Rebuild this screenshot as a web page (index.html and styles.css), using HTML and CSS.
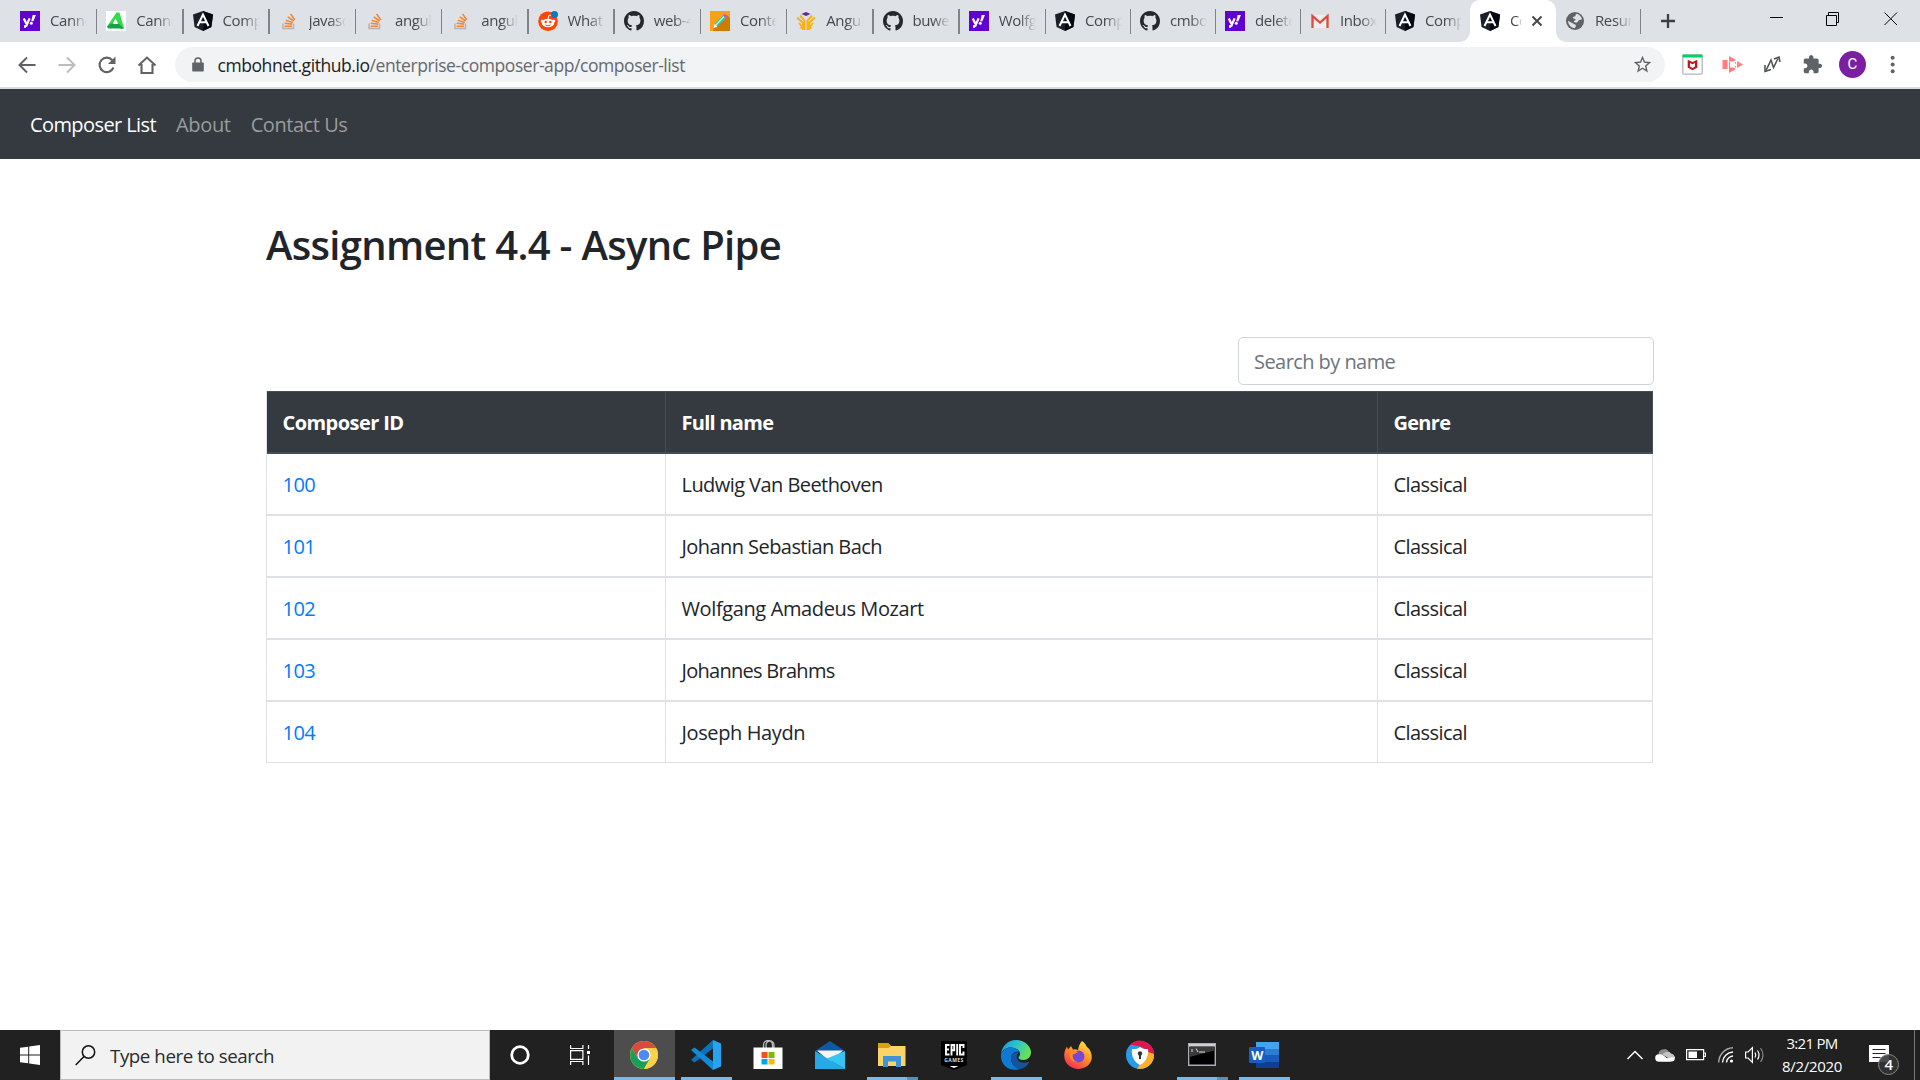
FILE: index.html
```html
<!DOCTYPE html>
<html lang="en">
<head>
<meta charset="utf-8">
<title>Enterprise Composer App</title>
<link rel="stylesheet" href="styles.css">
</head>
<body>
<svg class="sprite" width="0" height="0" aria-hidden="true">
  <symbol id="yahoo" viewBox="0 0 20 20"><path fill="#6001d2" d="M0 0h20v20H0z"/><path d="M3.800 7.400l2.600 5.400M9.600 7.400L6 15.600M4 15.500h2" fill="none" stroke="#fff" stroke-width="2.300"/><path d="M12.700 4h3.200l-2.500 6.200h-2.200z" fill="#fff"/><circle cx="11.300" cy="12.200" r="1.500" fill="#fff"/></symbol>
  <symbol id="canna" viewBox="0 0 20 20"><path fill="#fff" d="M0 0h20v20H0z"/><path fill="#35d94f" d="M10.500 1.500h3L18 17l-3 1.500-5.500-11-4 8H1z"/><path fill="#15a343" d="M5.500 12.500h7l5.500 5H2l-1-2z"/><path fill="#fff" d="M9.500 8.500l2.500 4.500H7z"/></symbol>
  <symbol id="angular" viewBox="0 0 20 20"><path fill="#1b1f27" d="M10 0l10 3.500-1.600 12.500L10 20 1.600 16 0 3.500z"/><path fill="#050811" d="M10 0l10 3.500-1.600 12.500L10 20z"/><path d="M4.500 15L10 3.500 15.500 15M7 11.200h6" fill="none" stroke="#fff" stroke-width="2"/></symbol>
  <symbol id="stack" viewBox="0 0 20 20"><path d="M4 12.500v5h10.500v-5" fill="none" stroke="#b1b5ba" stroke-width="1.500"/><path d="M5.500 15.200h7.500M5.700 12.300l7.500.8M6.700 9.200l7 2.200M8.700 5.800l6 4.200M11.600 3l4.200 5.900" stroke="#f48735" stroke-width="1.600"/></symbol>
  <symbol id="reddit" viewBox="0 0 20 20"><circle cx="10" cy="10.200" r="9.800" fill="#ff4500"/><ellipse cx="10" cy="12" rx="6.200" ry="4.300" fill="#fff"/><circle cx="4.200" cy="10" r="1.500" fill="#fff"/><circle cx="15.800" cy="10" r="1.500" fill="#fff"/><path d="M10 8l1-4 3 .7" stroke="#fff" fill="none"/><circle cx="7.700" cy="11" r="1.200" fill="#ff4500"/><circle cx="12.300" cy="11" r="1.200" fill="#ff4500"/><path d="M7.500 14q2.500 1.700 5 0" stroke="#ff4500" fill="none"/><circle cx="16.500" cy="3.500" r="3.500" fill="#0079d3"/></symbol>
  <symbol id="github" viewBox="0 0 16 16"><path fill="#24292e" d="M8 0C3.580 0 0 3.580 0 8c0 3.540 2.290 6.530 5.470 7.590.4.070.55-.17.55-.38 0-.19-.01-.82-.01-1.490-2.010.37-2.530-.49-2.690-.94-.09-.23-.48-.94-.82-1.130-.28-.15-.68-.52-.01-.53.63-.01 1.080.58 1.230.82.72 1.210 1.870.87 2.330.66.070-.52.28-.87.51-1.070-1.780-.2-3.640-.89-3.640-3.950 0-.87.31-1.590.82-2.150-.08-.2-.36-1.020.08-2.120 0 0 .67-.21 2.200.82.64-.18 1.320-.27 2-.27s1.360.09 2 .27c1.530-1.040 2.200-.82 2.200-.82.44 1.100.16 1.920.08 2.120.51.56.82 1.270.82 2.150 0 3.070-1.870 3.750-3.650 3.950.29.25.54.73.54 1.480 0 1.070-.01 1.930-.01 2.200 0 .21.15.46.55.38A8.010 8.010 0 0016 8c0-4.420-3.580-8-8-8z"/></symbol>
  <symbol id="pencil" viewBox="0 0 20 20"><path fill="#f9a01b" d="M0 0h20v20H0z"/><path fill="#d07b00" d="M17 4l3 3v13H3l1-4z"/><path d="M4 16.500l1.200-4 8.800-9 3 2.500-9 9z" fill="#25c6b8"/><path d="M5.500 14.500L15 4.500" stroke="#b8f0dc" stroke-width="1.300"/><path d="M12.800 4.500L14.500 2.500l3 2.500-1.700 2z" fill="#c85bc0"/><path d="M3.500 17l1.200-4 2.700 2.700z" fill="#fff"/></symbol>
  <symbol id="hands" viewBox="0 0 20 20"><path d="M10 1l4.500 2L10 5 5.500 3z" fill="#5c2d91"/><g fill="none" stroke="#fbb116" stroke-width="1.900"><path d="M1 6.500l6 5.500v7M19 6.500l-6 5.500v7M3 12l2.500 3v3M17 12l-2.500 3v3M4 4.500l4.500 5V19M16 4.500l-4.500 5V19"/></g></symbol>
  <symbol id="gmail" viewBox="0 0 20 20"><path fill="#eee" d="M2 4h16v13H2z"/><path d="M2.500 17V5l7.500 6.500L17.500 5v12" fill="none" stroke="#dd4b3e" stroke-width="2.300"/></symbol>
  <symbol id="globe" viewBox="0 0 20 20"><circle cx="10" cy="10" r="9" fill="#5f6368"/><path fill="#dee1e6" d="M11 2.800c3 .3 5.400 2.700 6 5.500-2 1-3.500.5-4 2.200-.3 1.500-2 1-3.500.8-1-.2-1-1.500.2-1.800 1.500-.4 1-1.700-.5-1.700-2-.2-2-2 .2-2.200 1.500-.2 1-1.800 1.600-2.800zM3 9.800l5 2.700c1.500 1 3 .8 3 2.400l-1.200 2.300C6.500 17 3.300 14.500 3 9.800z"/></symbol>
  <symbol id="x" viewBox="0 0 12 12"><path d="M1.500 1.500l9 9M10.500 1.500l-9 9" stroke="#45494d" stroke-width="2" fill="none"/></symbol>
</svg>

<header class="tabs">
  <div class="tab"><svg><use href="#yahoo"/></svg><span>Canno</span></div>
  <div class="tab"><svg><use href="#canna"/></svg><span>Canno</span></div>
  <div class="tab"><svg><use href="#angular"/></svg><span>Comp</span></div>
  <div class="tab"><svg><use href="#stack"/></svg><span>javasc</span></div>
  <div class="tab"><svg><use href="#stack"/></svg><span>angul</span></div>
  <div class="tab"><svg><use href="#stack"/></svg><span>angul</span></div>
  <div class="tab"><svg><use href="#reddit"/></svg><span>What</span></div>
  <div class="tab"><svg><use href="#github"/></svg><span>web-4</span></div>
  <div class="tab"><svg><use href="#pencil"/></svg><span>Conte</span></div>
  <div class="tab"><svg><use href="#hands"/></svg><span>Angul</span></div>
  <div class="tab"><svg><use href="#github"/></svg><span>buwe</span></div>
  <div class="tab"><svg><use href="#yahoo"/></svg><span>Wolfg</span></div>
  <div class="tab narrow"><svg><use href="#angular"/></svg><span>Comp</span></div>
  <div class="tab narrow"><svg><use href="#github"/></svg><span>cmbo</span></div>
  <div class="tab narrow"><svg><use href="#yahoo"/></svg><span>delete</span></div>
  <div class="tab narrow"><svg><use href="#gmail"/></svg><span>Inbox</span></div>
  <div class="tab before-active"><svg><use href="#angular"/></svg><span>Comp</span></div>
  <div class="tab active"><svg><use href="#angular"/></svg><span>Co</span><svg class="tab-close"><use href="#x"/></svg></div>
  <div class="tab after-active"><svg><use href="#globe"/></svg><span>Resun</span></div>
  <svg class="new-tab" viewBox="0 0 14 14"><path d="M7 0v14M0 7h14" stroke="#3c4043" stroke-width="2.300"/></svg>
  <svg class="window-controls" viewBox="0 0 128 14" fill="none" stroke="#000" stroke-width="1"><path d="M0 5.500h13"/><path d="M56.500 3.500h10v10h-10zM58.500 3.500v-3h10v10h-2"/><path d="M114.500 .5l12.500 12.500M127 .5l-12.500 12.500"/></svg>
</header>

<div class="toolbar">
  <div class="nav-buttons">
    <svg viewBox="0 0 20 20" fill="none" stroke="#5f6368" stroke-width="2"><path d="M18.500 10H3M10 2.500L2.500 10l7.500 7.500"/></svg>
    <svg viewBox="0 0 20 20" fill="none" stroke="#babcbe" stroke-width="2"><path d="M1.500 10H17M10 2.500l7.500 7.500-7.500 7.500"/></svg>
    <svg viewBox="0 0 20 20"><path d="M16.500 12.500A7.200 7.200 0 1 1 15.300 5.200" fill="none" stroke="#5f6368" stroke-width="2.100"/><path d="M18.500 1.500v7.500H11z" fill="#5f6368"/></svg>
    <svg viewBox="0 0 20 20" fill="none" stroke="#5f6368" stroke-width="2.100"><path d="M1.500 10.500L10 2.600l8.500 7.900M4.500 9v9h11V9"/></svg>
  </div>
  <div class="omnibox">
    <svg class="lock" viewBox="0 0 12 15"><path d="M1 5.500h10q.8 0 .8.800v7.400q0 .8-.8.800H1q-.8 0-.8-.8V6.300q0-.8.800-.8z" fill="#5f6368"/><path d="M3 6V4a3 3 0 0 1 6 0v2" fill="none" stroke="#5f6368" stroke-width="1.500"/></svg>
    <span class="url"><b>cmbohnet.github.io</b>/enterprise-composer-app/composer-list</span>
    <svg class="star" viewBox="0 0 24 24"><path fill="#5f6368" d="M22 9.240l-7.190-.62L12 2 9.190 8.630 2 9.240l5.460 4.730L5.820 21 12 17.270 18.180 21l-1.630-7.030L22 9.240zM12 15.400l-3.760 2.270 1-4.280-3.320-2.880 4.380-.38L12 6.100l1.710 4.040 4.380.38-3.320 2.880 1 4.280L12 15.400z"/></svg>
  </div>
  <div class="extensions">
    <svg viewBox="0 0 21 21"><rect x=".8" y="1" width="19.400" height="19.200" rx="1.500" fill="#fff" stroke="#b5b5b8" stroke-width="1.300"/><path d="M.5.500h20v3H.5z" fill="#00d166"/><path d="M5.700 5.800l4.800 2.200 4.800-2.200v7.700l-4.800 2.800-4.800-2.800z" fill="#c01818"/><path d="M8 9l2.500 1.300L13 9v3.500l-2.500 1.400L8 12.500z" fill="#fff"/></svg>
    <svg viewBox="0 0 21 21" fill="#ff7d7d"><path d="M.5 6h5v9h-5zM7 2l7 4-2.500 1.500H7zM15 7l6 3.500-6 3.500zM7 19l7-4-2.500-1.500H7z"/><path d="M7.500 8v6" stroke="#ff7d7d" stroke-width="1.200"/><path d="M13.500 8v1.500M13.500 12v1.500" stroke="#ff7d7d" stroke-width="1.200"/></svg>
    <svg viewBox="0 0 21 21" fill="none" stroke="#4b4f53" stroke-width="1.500"><path d="M4 16.500L9 6l2.500 7.500L16 4.500"/><path d="M12 5l5-2 1 5M3 11v6.500l6-2"/></svg>
    <svg viewBox="0 0 24 24"><path fill="#5f6368" d="M20.500 11H19V7c0-1.100-.9-2-2-2h-4V3.500C13 2.120 11.880 1 10.500 1S8 2.120 8 3.500V5H4c-1.100 0-1.990.9-1.990 2v3.800H3.500c1.490 0 2.700 1.210 2.700 2.700s-1.210 2.700-2.700 2.700H2V20c0 1.100.9 2 2 2h3.800v-1.500c0-1.490 1.210-2.700 2.700-2.700 1.490 0 2.700 1.210 2.700 2.700V22H17c1.100 0 2-.9 2-2v-4h1.500c1.380 0 2.500-1.120 2.500-2.500S21.880 11 20.500 11z"/></svg>
    <span class="avatar">C</span>
    <svg viewBox="0 0 20 20" fill="#5f6368"><circle cx="9.200" cy="3.500" r="1.900"/><circle cx="9.200" cy="10" r="1.900"/><circle cx="9.200" cy="16.500" r="1.900"/></svg>
  </div>
</div>

<nav class="navbar">
  <a class="current">Composer List</a>
  <a class="about">About</a>
  <a class="contact">Contact Us</a>
</nav>

<main class="page">
  <h2>Assignment 4.4 - Async Pipe</h2>
  <input class="search" type="text" placeholder="Search by name">
  <table>
    <colgroup><col class="col-id"><col class="col-name"><col></colgroup>
    <thead><tr><th>Composer ID</th><th class="tight">Full name</th><th class="tight">Genre</th></tr></thead>
    <tbody>
      <tr><td><a>100</a></td><td>Ludwig Van Beethoven</td><td>Classical</td></tr>
      <tr><td><a>101</a></td><td>Johann Sebastian Bach</td><td>Classical</td></tr>
      <tr><td><a>102</a></td><td class="loose">Wolfgang Amadeus Mozart</td><td>Classical</td></tr>
      <tr><td><a>103</a></td><td class="tight">Johannes Brahms</td><td>Classical</td></tr>
      <tr><td><a>104</a></td><td class="loose">Joseph Haydn</td><td>Classical</td></tr>
    </tbody>
  </table>
</main>

<footer class="taskbar">
  <div class="start"><svg width="20" height="20" viewBox="0 0 20 20" fill="#fff"><path d="M0 2.800l8.200-1.100v7.800H0zM9.200 1.500L20 0v9.500H9.200zM0 10.500h8.200v7.800L0 17.200zM9.200 10.500H20V20L9.200 18.500z"/></svg></div>
  <div class="search-box"><svg width="21" height="21" viewBox="0 0 21 21" fill="none" stroke="#111" stroke-width="1.500"><circle cx="13.500" cy="7" r="6.200"/><path d="M9 11.500L.7 20"/></svg><span>Type here to search</span></div>
  <div class="sys"><svg width="20" height="20" viewBox="0 0 20 20"><circle cx="10" cy="10" r="8.300" fill="none" stroke="#fff" stroke-width="2.800"/></svg></div>
  <div class="sys"><svg width="20" height="20" viewBox="0 0 20 20" fill="none" stroke="#fff" stroke-width="1.200"><path d="M.6 0v3.500h12.300V0M.6 5.600h12.300v8.800H.6zM.6 20v-3.500h12.300V20M18.500 0v4M18.500 10.500V20"/><path d="M17 6h3v3h-3z" fill="#fff" stroke="none"/></svg></div>
  <div class="apps">
    <div class="app focus run"><svg viewBox="0 0 30 30"><circle cx="15" cy="15" r="14" fill="#fdd04a"/><path d="M15 1a14 14 0 0 1 12.100 7H15L9 18.500 2.900 8A14 14 0 0 1 15 1z" fill="#da4a3e"/><path d="M2.900 8l6.100 10.500L21 18.500 15 29A14 14 0 0 1 2.900 8z" fill="#1a9f5a"/><path d="M21 18.500L15 29A14 14 0 0 0 27.100 8H15z" fill="#fdd04a"/><circle cx="15" cy="15" r="6.600" fill="#fff"/><circle cx="15" cy="15" r="5.300" fill="#4c8bf5"/></svg></div>
    <div class="app run"><svg viewBox="0 0 30 30"><path d="M22 0L30 3.500v23L22 30z" fill="#27a3f0"/><path d="M22 0v8.500L3.500 22.500 0 20z" fill="#0a72bd"/><path d="M0 10l3.500-2.500L22 21.500V30z" fill="#118bd8"/></svg></div>
    <div class="app"><svg viewBox="0 0 30 30"><path d="M10.500 9V5a4.500 4.500 0 0 1 9 0v4M13 9V5a4 4 0 0 1 8 0v4" fill="none" stroke="#bbb" stroke-width="1.300"/><path d="M.5 7.500h29V29h-29z" fill="#fff"/><path d="M8.500 12h6v6h-6z" fill="#f25022"/><path d="M15.500 12h6v6h-6z" fill="#7fba00"/><path d="M8.500 19h6v5.500h-6z" fill="#00a4ef"/><path d="M15.500 19h6v5.500h-6z" fill="#ffb900"/></svg></div>
    <div class="app"><svg viewBox="0 0 30 30"><path d="M0 11L15 1l15 10-15 6z" fill="#0c59a4"/><path d="M2 10.500h26L15 22z" fill="#f5f5f5"/><path d="M0 11l30 18H0z" fill="#27a9e8"/><path d="M30 11v18L12 18.500z" fill="#36c4f1"/></svg></div>
    <div class="app run multi"><svg viewBox="0 0 30 30"><path d="M1 3h10l3 3h14.500v20H1z" fill="#fcd366"/><path d="M1 3h10l3 3-2.500 2H1z" fill="#dd9f0c"/><path d="M6 27V16h18v11h-5v-5.500h-8V27z" fill="#3f94d8"/></svg></div>
    <div class="app"><svg viewBox="0 0 30 30"><path d="M2 1h26v24l-13 5-13-5z" fill="#000"/><g fill="none" stroke="#fff" stroke-width="1.900"><path d="M10.500 5H7v9.500h3.500M7 9.500h3M12.500 15.500V5h2.700v5.300h-2.500M18.200 4v11.500M24.500 8V5H21v9.500h3.500v-3"/></g><text x="15" y="22" text-anchor="middle" font-family="Open Sans, sans-serif" font-size="5" font-weight="700" letter-spacing=".4" fill="#ddd">GAMES</text><path d="M10.500 26h9L15 28z" fill="#fff"/></svg></div>
    <div class="app run"><svg viewBox="0 0 30 30"><defs><linearGradient id="eg" x1="0" y1="0" x2="1" y2=".4"><stop stop-color="#1c8fd6"/><stop offset=".5" stop-color="#2bc2d0"/><stop offset="1" stop-color="#67e05a"/></linearGradient></defs><path d="M0 14C1 6 7 0 15 0c8.500 0 15 6 15 12.500 0 4.500-3.500 7.500-7.500 7.500-3.500 0-5-1-5-2.200 0-1 1.500-1.500 1.500-4C19 10.500 15 7.500 10 7.500S1.500 10 0 14z" fill="url(#eg)"/><path d="M0 14c1.500-4 5.500-6.500 10-6.500s7.500 2 8.500 4.500c-5-1.500-8.500 2-8.500 6.500 0 5.500 4.500 9.500 9.500 10.500C8 32.500-1 25 0 14z" fill="#0e7ad1"/><path d="M18 12.500c-5-1.500-8 2-8 6C10 24.500 15 30 20 29c3.500-1 6.500-3.500 8-6.500.3-.7-.2-1-.8-.7-6.200 2.700-13.200-1-11-6.600.4-1.100 1-2 1.800-2.700z" fill="#12549f"/></svg></div>
    <div class="app"><svg viewBox="0 0 30 30"><defs><linearGradient id="fg" x1=".8" y1="0" x2=".2" y2="1"><stop stop-color="#ffe544"/><stop offset=".5" stop-color="#ff8a25"/><stop offset="1" stop-color="#f8235a"/></linearGradient></defs><path d="M19 1c3 2 4 4 4.500 5.500 4 3 6 8 5 13-1.500 6-7 9.500-13.500 9.500S1.500 24 1.200 16C1 12 2.500 9 4 6.500l1 3L8 6l2 3.500q3-.5 5 .5 1-6 4-9z" fill="url(#fg)"/><circle cx="15.500" cy="16.500" r="6" fill="#7a46d8"/><path d="M6 12q5-3 9 0-3 2-5.500 2.500Q9 20 14 22 6 22 6 12z" fill="#ff8a1e"/></svg></div>
    <div class="app"><svg viewBox="0 0 30 30"><circle cx="15" cy="15" r="14" fill="#2a9be8"/><path d="M5 5a14 14 0 0 1 24 9l-5-1C20 7 12 5 5 5z" fill="#e5154b"/><path d="M29 14a14 14 0 0 1-17 14.700L15 24c5-2 8-6 8-12z" fill="#fdb022"/><path d="M15 7c3 2 5 2.300 8 2 1 7-2 13-8 16-6-3-9-9-8-16 3 .3 5 0 8-2z" fill="#fff"/><circle cx="15" cy="13.500" r="2.200" fill="#333"/><path d="M14 14h2v5h-2z" fill="#333"/></svg></div>
    <div class="app run multi"><svg viewBox="0 0 30 30"><path d="M1.700 3.700h26.600v21.600H1.700z" fill="#000" stroke="#a7adb3" stroke-width="1.400"/><path d="M2 4h26v2.500H2z" fill="#cdd1d5"/><path d="M2.500 7h25v3.500L2.500 17z" fill="#3a3a3a"/><path d="M5 9v3M7 9.500v.1M7 11.500v.1M9 8.500l2 3.500M12 12h6" stroke="#ddd"/></svg></div>
    <div class="app run"><svg viewBox="0 0 30 30"><path d="M7 2h23v7H7z" fill="#41a5ee"/><path d="M7 9h23v6H7z" fill="#2b7cd3"/><path d="M7 15h23v7H7z" fill="#185abd"/><path d="M7 22h23v6H7z" fill="#103f91"/><rect y="7" width="16" height="16" rx="1" fill="#1a5dbe"/><text x="8" y="19.500" text-anchor="middle" font-family="Open Sans, sans-serif" font-size="12.500" font-weight="700" fill="#fff">W</text></svg></div>
  </div>
  <div class="tray">
    <svg width="16" height="10" viewBox="0 0 16 10" fill="none" stroke="#fff" stroke-width="1.500"><path d="M.5 9L8 1.500 15.500 9"/></svg>
    <svg width="20" height="14" viewBox="0 0 20 14"><path d="M3.500 6.500a5 5 0 0 1 4-5Q11 0 13.500 3L7 7z" fill="#8d8d8d"/><path d="M3.800 13.500a3.500 3.500 0 0 1 0-7.200Q6 5.800 8 7l8 6.500z" fill="#fff"/><path d="M7 6.500l3-2q4-2.500 6 1 3.500.5 4 4.500l-5 1z" fill="#c4c4c4"/><path d="M3 13.500l7-3 9.800-1.500q.5 4.500-3.300 4.500z" fill="#fff"/></svg>
    <svg width="20" height="12" viewBox="0 0 20 12"><path d="M.6.600h17v10H.6zM18 4h1.500v3.500H18" fill="none" stroke="#fff" stroke-width="1.200"/><path d="M2.500 2.500h8.500v6.500H2.500z" fill="#fff"/></svg>
    <svg width="16" height="16" viewBox="0 0 16 16" fill="none" stroke="#fff" stroke-width="1.400"><path d="M.7 15.500A15 15 0 0 1 15 .7" stroke="#aaa"/><path d="M4.500 15.500A11 11 0 0 1 15 5M8.500 15.500A7 7 0 0 1 15 9"/><circle cx="13.500" cy="14" r="1.600" fill="#fff" stroke="none"/></svg>
    <svg width="20" height="18" viewBox="0 0 20 18" fill="none" stroke="#fff" stroke-width="1.200"><path d="M.6 6h2.500l4.300-4.300v14.600L3.100 12H.6z"/><path d="M10 6.500q1.500 2.500 0 5M12.500 4.500q3 4.500 0 9"/><path d="M15.500 2q5 7 0 14" stroke="#888"/></svg>
  </div>
  <div class="clock"><span class="time">3:21 PM</span><span>8/2/2020</span></div>
  <div class="notify"><svg width="31" height="31" viewBox="0 0 31 31"><path d="M0 0h20v17H0z" fill="#fff"/><path d="M3.500 4.500h13M3.500 8.500h13M3.500 12.500h8" stroke="#222" stroke-width="1.200"/><circle cx="19.500" cy="19.500" r="10" fill="#333" fill-opacity=".88" stroke="#888" stroke-width="1"/><text x="19.500" y="25" text-anchor="middle" font-family="Open Sans, sans-serif" font-size="15" font-weight="600" fill="#fff">4</text></svg></div>
  <div class="show-desktop"></div>
</footer>
</body>
</html>
```
FILE: styles.css
```css
* { box-sizing: border-box; }
body {
  margin: 0;
  width: 1920px;
  height: 1080px;
  overflow: hidden;
  display: flex;
  flex-direction: column;
  background: #fff;
  color: #212529;
  font-family: "Open Sans", "Noto Sans", sans-serif;
  font-size: 20px;
  letter-spacing: -.56px;
}
svg { flex: none; display: block; }
.sprite { position: absolute; }

/* Tab strip */
.tabs {
  display: flex;
  height: 42px;
  flex: none;
  padding-left: 11px;
  background: #dee1e6;
}
.tab {
  position: relative;
  display: flex;
  align-items: center;
  flex: none;
  width: 86.25px;
  padding-left: 9px;
  font-size: 15px;
  letter-spacing: -.4px;
  color: #45494d;
}
.tab::after {
  content: "";
  position: absolute;
  right: 0;
  top: 9px;
  width: 1.5px;
  height: 25px;
  background: #808488;
}
.tab svg { width: 20px; height: 20px; }
.tab span {
  width: 37px;
  margin: -2px 0 0 10px;
  overflow: hidden;
  white-space: nowrap;
  line-height: 24px;
  -webkit-mask-image: linear-gradient(90deg, #000 55%, transparent);
  mask-image: linear-gradient(90deg, #000 55%, transparent);
}
.tab.narrow { width: 85px; }
.tab.before-active { width: 84px; }
.tab.before-active::after { display: none; }
.tab.active {
  width: 86px;
  padding-left: 10px;
  background: #fff;
  border-radius: 10px 10px 0 0;
}
.tab.active::before,
.tab.active::after {
  content: "";
  position: absolute;
  top: auto;
  bottom: 0;
  width: 10px;
  height: 10px;
}
.tab.active::before { left: -10px; background: radial-gradient(circle at 0 0, transparent 9.5px, #fff 10px); }
.tab.active::after { right: -10px; background: radial-gradient(circle at 100% 0, transparent 9.5px, #fff 10px); }
.tab.active span { width: 12px; }
.tab .tab-close { width: 12px; height: 12px; margin-left: 8.500px; }
.tab.after-active { width: 85px; padding-left: 9px; }
.new-tab { width: 14px; height: 14px; margin: 14px 0 0 20px; }
.window-controls { width: 128px; height: 14px; margin: 12px 0 0 95px; }

/* Address row */
.toolbar {
  display: flex;
  align-items: center;
  flex: none;
  height: 47px;
  border-bottom: 2px solid #dadce0;
}
.nav-buttons { display: flex; gap: 20px; padding-left: 17px; }
.nav-buttons svg { width: 20px; height: 20px; }
.omnibox {
  display: flex;
  align-items: center;
  width: 1490px;
  height: 35px;
  margin-left: 18px;
  padding: 0 12px 0 16.500px;
  border-radius: 18px;
  background: #f1f3f4;
}
.lock { width: 12px; height: 15px; }
.url { margin-left: 14px; font-size: 17.500px; letter-spacing: -.43px; color: #65696e; white-space: nowrap; }
.url b { font-weight: 400; color: #202124; }
.star { width: 21px; height: 21px; margin-left: auto; }
.extensions { display: flex; align-items: center; gap: 19px; padding-left: 17px; }
.extensions svg { width: 21px; height: 21px; }
.avatar {
  width: 27px;
  height: 27px;
  margin: 0 -2px 0 -3px;
  border-radius: 50%;
  background: #7b1fa2;
  color: #fff;
  font: 15px/27px Roboto, sans-serif;
  letter-spacing: 0;
  text-align: center;
}

/* Site navigation */
.navbar {
  display: flex;
  align-items: center;
  flex: none;
  gap: 20px;
  height: 70px;
  padding: 0 30px;
  background: #343a40;
  color: #999c9f;
}
.navbar .current { color: #fff; letter-spacing: -.59px; }
.about { letter-spacing: -.34px; }
.contact { letter-spacing: -.44px; }

/* Page */
.page { width: 1388px; margin-left: 266px; flex: 1; }
h2 { margin: 57px 0 0; font-size: 40px; line-height: 58px; font-weight: 600; letter-spacing: -.7px; }
.search {
  display: block;
  width: 416px;
  height: 48px;
  margin: 63px 0 6px auto;
  padding: 0 15px;
  border: 1px solid #ced4da;
  border-radius: 5px;
  font: inherit;
  letter-spacing: -.56px;
}
.search::placeholder { color: #6c757d; opacity: 1; }
table { width: 1387px; table-layout: fixed; border-collapse: separate; border-spacing: 0; border-left: 1px solid #dee2e6; }
.col-id { width: 399px; }
.col-name { width: 712px; }
th, td { height: 62px; padding: 0 15px 0 15.500px; text-align: left; border-right: 1px solid #dee2e6; border-bottom: 2px solid #dee2e6; }
tbody tr:last-child td { height: 61px; border-bottom-width: 1px; }
th { height: 63px; color: #fff; background: #343a40; border: 1px solid #454d55; border-left: 0; border-bottom-width: 2px; }
td a { color: #007bff; }
.tight { letter-spacing: -.72px; }
.loose { letter-spacing: -.38px; }

/* Taskbar */
.taskbar { display: flex; flex: none; height: 50px; background: #202120; color: #fff; }
.taskbar > div { flex: none; }
.start { width: 60px; padding: 15px 0 0 20px; }
.search-box {
  display: flex;
  width: 430px;
  align-items: center;
  padding-left: 14px;
  background: #f2f2f2;
  border: 1px solid #bcbcbc;
  color: #2b2b2b;
  font-size: 18.750px;
}
.search-box span { margin-left: 14px; letter-spacing: -.45px; }
.sys { display: flex; width: 60px; align-items: center; justify-content: center; }
.apps { display: flex; margin-left: 3px; }
.app { position: relative; display: flex; width: 62px; align-items: center; justify-content: center; }
.app svg { width: 30px; height: 30px; }
.app.focus { background: linear-gradient(90deg, transparent 1px, #4d4d4d 1px); }
.app.run::after { content: ""; position: absolute; left: 6px; bottom: 0; width: 51px; height: 3px; background: #76b9ed; }
.app.focus::after { left: 1px; width: 61px; }
.app.multi::after { background: linear-gradient(90deg, #76b9ed 40px, #5a8fb8 40px); }
.tray { display: flex; align-items: center; gap: 11.500px; margin-left: 332px; width: 140px; }
.clock { display: flex; flex-direction: column; width: 90px; align-items: center; padding-top: 2px; font-size: 15px; line-height: 23px; letter-spacing: -.3px; }
.clock .time { letter-spacing: -.7px; }
.notify { padding: 15px 0 0 12px; width: 57px; }
.show-desktop { width: 6px; border-left: 1px solid #777; }
```
